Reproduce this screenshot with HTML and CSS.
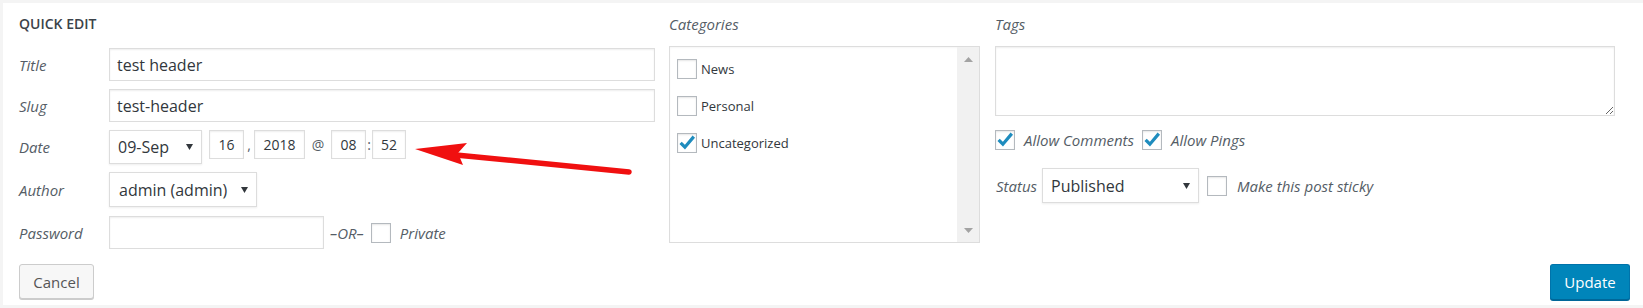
FILE: index.html
```html
<!DOCTYPE html>
<html lang="en">
  <head>
    <meta charset="UTF-8" />
    <meta name="viewport" content="width=device-width, initial-scale=1.0" />
    <title>Quick Edit</title>
    <link rel="stylesheet" href="styles.css">
  </head>
  <body>
    <div id="page">
      <div class="quick-edit">
        <div class="columns">
          <fieldset class="col-main">
            <h4 class="legend">QUICK EDIT</h4>
            <div class="field">
              <span class="field-label">Title</span>
              <input class="text-input wide" type="text" value="test header" />
            </div>
            <div class="field">
              <span class="field-label">Slug</span>
              <input class="text-input wide" type="text" value="test-header" />
            </div>
            <div class="field">
              <span class="field-label">Date</span>
              <div class="date-fields">
                <div class="select select-month">
                  <span>09-Sep</span>
                  <svg class="caret" width="7" height="6" viewBox="0 0 7 6"><path d="M0 0h7L3.5 6z" /></svg>
                </div>
                <input class="small-input day" type="text" value="16" />
                <span class="sep comma">,</span>
                <input class="small-input year" type="text" value="2018" />
                <span class="sep at">@</span>
                <input class="small-input hour" type="text" value="08" />
                <span class="sep colon">:</span>
                <input class="small-input minute" type="text" value="52" />
              </div>
            </div>
            <div class="field field-author">
              <span class="field-label">Author</span>
              <div class="select select-author">
                <span>admin (admin)</span>
                <svg class="caret" width="7" height="6" viewBox="0 0 7 6"><path d="M0 0h7L3.5 6z" /></svg>
              </div>
            </div>
            <div class="field">
              <span class="field-label">Password</span>
              <input class="text-input password" type="text" value="" />
              <span class="or-text">–OR–</span>
              <span class="check"></span>
              <span class="check-text">Private</span>
            </div>
          </fieldset>

          <fieldset class="col-cats">
            <span class="col-title">Categories</span>
            <div class="cat-box">
              <ul class="cat-list">
                <li class="cat-item"><span class="check"></span><span>News</span></li>
                <li class="cat-item"><span class="check"></span><span>Personal</span></li>
                <li class="cat-item">
                  <span class="check">
                    <svg width="20" height="20" viewBox="0 0 20 20"><path class="tick" d="M3.6 9.8l4.3 4.4 8.9-10.6" /></svg>
                  </span>
                  <span>Uncategorized</span>
                </li>
              </ul>
              <div class="scrollbar">
                <svg width="9" height="5" viewBox="0 0 9 5"><path d="M0 5h9L4.5 0z" /></svg>
                <svg width="9" height="5" viewBox="0 0 9 5"><path d="M0 0h9L4.5 5z" /></svg>
              </div>
            </div>
          </fieldset>

          <fieldset class="col-tags">
            <span class="col-title">Tags</span>
            <textarea class="tags-area"></textarea>
            <div class="tag-opts">
              <span class="check">
                <svg width="20" height="20" viewBox="0 0 20 20"><path class="tick" d="M3.6 9.8l4.3 4.4 8.9-10.6" /></svg>
              </span>
              <span class="check-text">Allow Comments</span>
              <span class="check">
                <svg width="20" height="20" viewBox="0 0 20 20"><path class="tick" d="M3.6 9.8l4.3 4.4 8.9-10.6" /></svg>
              </span>
              <span class="check-text">Allow Pings</span>
            </div>
            <div class="status-row">
              <span class="status-label">Status</span>
              <div class="select select-status">
                <span>Published</span>
                <svg class="caret" width="7" height="6" viewBox="0 0 7 6"><path d="M0 0h7L3.5 6z" /></svg>
              </div>
              <span class="check"></span>
              <span class="check-text">Make this post sticky</span>
            </div>
          </fieldset>
        </div>

        <div class="actions">
          <button class="button cancel">Cancel</button>
          <button class="button update">Update</button>
        </div>
      </div>

      <svg class="annotation" width="1643" height="308" viewBox="0 0 1643 308">
        <path class="arrow-shaft" d="M456 155L629 172" />
        <path class="arrow-head" d="M415 149L467 143L458 153L463 165z" />
      </svg>
    </div>
  </body>
</html>
```

FILE: styles.css
```css
body {
  margin: 0;
  background-color: #f4f4f4;
  font-family: "Open Sans", "Noto Sans", sans-serif;
  color: #32373c;
}
#page {
  position: relative;
  padding: 3px 0 3px 3px;
}
.quick-edit {
  background-color: #fff;
  padding: 11px 13px 5px 16px;
}
.columns {
  display: flex;
  align-items: flex-start;
}
fieldset {
  border: none;
  margin: 0;
  padding: 0;
  min-width: 0;
}
.col-main {
  width: 636px;
}
.col-cats {
  width: 311px;
  margin-left: 14px;
}
.col-tags {
  width: 620px;
  margin-left: 15px;
}
.legend {
  margin: 0 0 14px;
  font-size: 14px;
  font-weight: 600;
  line-height: 20px;
  color: #3c434a;
}
.col-title {
  display: block;
  margin-bottom: 12px;
  font-size: 15px;
  font-style: italic;
  line-height: 20px;
  color: #555d66;
}

/* left column rows */
.field {
  display: flex;
  align-items: center;
  margin-bottom: 8px;
}
.field:last-child {
  margin-bottom: 0;
}
.field-author {
  margin-bottom: 9px;
}
.field-label {
  width: 90px;
  flex-shrink: 0;
  font-size: 15px;
  font-style: italic;
  color: #555d66;
}
.text-input,
.small-input {
  box-sizing: border-box;
  margin: 0;
  border: 1px solid #ddd;
  box-shadow: inset 0 1px 2px rgba(0, 0, 0, 0.07);
  background-color: #fff;
  color: #32373c;
  font-family: inherit;
  outline: none;
}
.text-input {
  height: 33px;
  padding: 0 7px;
  font-size: 16px;
}
.wide {
  width: 546px;
}
.password {
  width: 215px;
}
.date-fields {
  display: flex;
  align-items: flex-start;
}
.small-input {
  height: 29px;
  padding: 0;
  font-size: 14px;
  text-align: center;
}
.day {
  width: 35px;
  margin-left: 7px;
}
.year {
  width: 51px;
}
.hour {
  width: 35px;
}
.minute {
  width: 34px;
}
.sep {
  font-size: 14px;
  line-height: 29px;
  color: #555d66;
  text-align: center;
}
.comma {
  width: 10px;
}
.at {
  width: 26px;
}
.colon {
  width: 6px;
}

/* fake selects */
.select {
  box-sizing: border-box;
  display: flex;
  align-items: center;
  justify-content: space-between;
  border: 1px solid #ddd;
  box-shadow: 0 1px 2px rgba(0, 0, 0, 0.07);
  background-color: #fff;
  font-size: 16px;
  color: #32373c;
  padding: 0 8px 0 8px;
}
.caret path {
  fill: #32373c;
}
.select-month {
  width: 93px;
  height: 34px;
}
.select-author {
  width: 148px;
  height: 35px;
  padding-left: 9px;
}
.select-status {
  width: 157px;
  height: 35px;
}

/* checkboxes */
.check {
  box-sizing: border-box;
  flex-shrink: 0;
  width: 20px;
  height: 20px;
  border: 1px solid #b4b9be;
  background-color: #fff;
  box-shadow: inset 0 1px 2px rgba(0, 0, 0, 0.1);
  position: relative;
}
.check svg {
  position: absolute;
  left: -1px;
  top: -1px;
}
.tick {
  fill: none;
  stroke: #1e8cbe;
  stroke-width: 3.2;
}
.check-text {
  font-size: 15px;
  font-style: italic;
  color: #555d66;
}
.or-text {
  margin: 0 7px 0 6px;
  font-size: 15px;
  font-style: italic;
  color: #555d66;
}
.or-text + .check {
  margin-right: 9px;
}

/* categories */
.cat-box {
  box-sizing: border-box;
  display: flex;
  height: 197px;
  border: 1px solid #ddd;
  box-shadow: inset 0 1px 2px rgba(0, 0, 0, 0.04);
}
.cat-list {
  flex: 1;
  list-style: none;
  margin: 0;
  padding: 12px 7px;
}
.cat-item {
  display: flex;
  align-items: center;
  margin-bottom: 17px;
  font-size: 13px;
  color: #32373c;
}
.cat-item .check {
  margin-right: 4px;
}
.scrollbar {
  width: 22px;
  display: flex;
  flex-direction: column;
  justify-content: space-between;
  align-items: center;
  padding: 10px 0 9px;
  background-color: #f1f1f1;
}
.scrollbar path {
  fill: #a3a3a3;
}

/* tags */
.tags-area {
  display: block;
  box-sizing: border-box;
  width: 620px;
  height: 70px;
  margin: 0;
  border: 1px solid #ddd;
  box-shadow: inset 0 1px 2px rgba(0, 0, 0, 0.07);
  resize: vertical;
  outline: none;
}
.tag-opts {
  display: flex;
  align-items: center;
  margin-top: 14px;
}
.tag-opts .check-text {
  margin: 0 8px 0 9px;
}
.status-row {
  display: flex;
  align-items: center;
  margin-top: 18px;
}
.status-label {
  width: 47px;
  padding-left: 1px;
  box-sizing: border-box;
  font-size: 15px;
  font-style: italic;
  color: #555d66;
}
.status-row .check {
  margin: 0 10px 0 8px;
}

/* bottom buttons */
.actions {
  display: flex;
  justify-content: space-between;
  align-items: flex-start;
  margin-top: 15px;
}
.button {
  box-sizing: border-box;
  height: 35px;
  padding: 0;
  border-radius: 3px;
  font-family: inherit;
  font-size: 15px;
  cursor: pointer;
}
.cancel {
  width: 75px;
  border: 1px solid #ccc;
  background-color: #f7f7f7;
  box-shadow: 0 1px 0 #ccc;
  color: #555;
}
.update {
  width: 80px;
  height: 36px;
  border: 1px solid #0073aa;
  border-bottom-color: #006799;
  background-color: #0085ba;
  box-shadow: 0 1px 0 #006799;
  color: #fff;
}

/* red annotation arrow */
.annotation {
  position: absolute;
  left: 0;
  top: 0;
  pointer-events: none;
}
.arrow-shaft {
  stroke: #f01010;
  stroke-width: 5.5;
  stroke-linecap: round;
}
.arrow-head {
  fill: #f01010;
}
```
